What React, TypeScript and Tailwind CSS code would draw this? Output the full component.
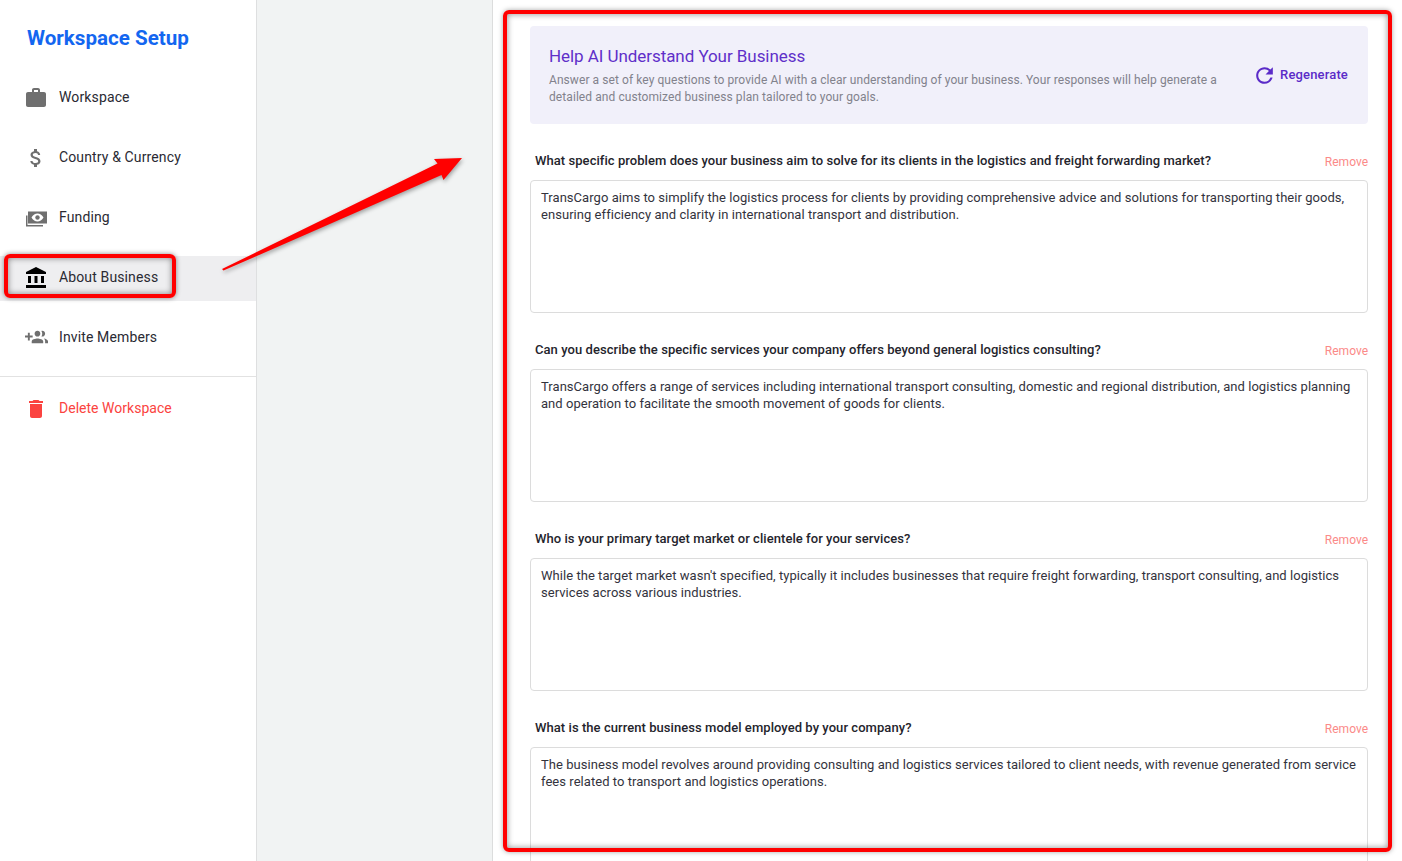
import React from "react";
import {
  MdWork,
  MdAttachMoney,
  MdAccountBalance,
  MdDelete,
  MdRefresh,
} from "react-icons/md";

const FundingIcon = () => (
  <svg width="24" height="24" viewBox="0 0 24 24" fill="currentColor">
    <path
      fillRule="evenodd"
      d="M4 5.500h19v12H4zM7.500 11.500c1.500-2.700 3.700-4 6-4s4.500 1.300 6 4c-1.500 2.700-3.700 4-6 4s-4.500-1.300-6-4z"
    />
    <circle cx="13.500" cy="11.500" r="2.200" />
    <path d="M2 9.500h1.500V19H19v1.500H2z" />
  </svg>
);

const InviteIcon = () => (
  <svg className="ml-[1px]" width="23" height="23" viewBox="0 0 24 24" fill="currentColor">
    <path d="M8 10H5V7H3v3H0v2h3v3h2v-3h3v-2zm10 1c1.660 0 2.990-1.340 2.990-3S19.660 5 18 5c-.320 0-.630.050-.910.140.570.810.900 1.790.900 2.860s-.340 2.040-.900 2.860c.280.090.590.140.910.140zm-5 0c1.660 0 2.990-1.340 2.990-3S14.660 5 13 5s-3 1.340-3 3 1.340 3 3 3zm6.620 2.160c.830.730 1.380 1.660 1.380 2.840v2h3v-2c0-1.540-2.370-2.490-4.380-2.840zM13 13c-2 0-6 1-6 3v2h12v-2c0-2-4-3-6-3z" />
  </svg>
);

const navItems = [
  { label: "Workspace", icon: <MdWork size={24} /> },
  { label: "Country & Currency", icon: <MdAttachMoney size={24} /> },
  { label: "Funding", icon: <FundingIcon /> },
  { label: "About Business", icon: <MdAccountBalance size={24} />, active: true },
  { label: "Invite Members", icon: <InviteIcon /> },
];

const questions = [
  {
    q: "What specific problem does your business aim to solve for its clients in the logistics and freight forwarding market?",
    a: "TransCargo aims to simplify the logistics process for clients by providing comprehensive advice and solutions for transporting their goods, ensuring efficiency and clarity in international transport and distribution.",
  },
  {
    q: "Can you describe the specific services your company offers beyond general logistics consulting?",
    a: "TransCargo offers a range of services including international transport consulting, domestic and regional distribution, and logistics planning and operation to facilitate the smooth movement of goods for clients.",
  },
  {
    q: "Who is your primary target market or clientele for your services?",
    a: "While the target market wasn't specified, typically it includes businesses that require freight forwarding, transport consulting, and logistics services across various industries.",
  },
  {
    q: "What is the current business model employed by your company?",
    a: "The business model revolves around providing consulting and logistics services tailored to client needs, with revenue generated from service fees related to transport and logistics operations.",
  },
];

const Sidebar = () => (
  <aside className="w-[257px] shrink-0 border-r border-[#dedfe0] bg-white">
    <h1 className="pl-[27px] pt-[24px] text-[20.6px] leading-[28px] font-bold text-[#1366f0]">
      Workspace Setup
    </h1>
    <nav className="mt-[24px] flex flex-col gap-[15px]">
      {navItems.map((item) => (
        <div
          key={item.label}
          className={`flex h-[45px] items-center pb-[2px] pl-[24px] ${item.active ? "bg-[#eeeef0] text-[#000000]" : "text-[#6f6f6f]"}`}
        >
          {item.icon}
          <span className="ml-[11px] text-[14px] tracking-[0.13px] text-[#2a2a33]">{item.label}</span>
        </div>
      ))}
    </nav>
    <div className="mt-[15px] border-t border-[#e2e2e2]" />
    <div className="mt-[9px] flex h-[45px] items-center pl-[24px] text-[#fb4340]">
      <MdDelete size={24} />
      <span className="ml-[11px] text-[14px] tracking-[0.02px]">Delete Workspace</span>
    </div>
  </aside>
);

const QuestionBlock = ({ q, a }: { q: string; a: string }) => (
  <div className="mt-[27px]">
    <div className="flex h-[20px] items-center justify-between pl-[5px]">
      <span className="text-[13px] font-medium tracking-[0.055px] text-[#24242c]">{q}</span>
      <span className="mt-[1px] text-[12px] text-[#fb8a88]">Remove</span>
    </div>
    <textarea
      readOnly
      defaultValue={a}
      className="mt-[9px] block h-[133px] w-full resize-none rounded-[4px] border border-[#dcdcdc] px-[10px] py-[8px] text-[13px] leading-[17px] tracking-[0.045px] text-[#33333d] outline-none"
    />
  </div>
);

// red markup drawn on top of the screenshot
const Annotations = () => (
  <>
    <div className="pointer-events-none absolute left-[4px] top-[254px] h-[44px] w-[172px] rounded-[6px] border-[4px] border-[#ff0000] shadow-[0_0_5px_rgba(0,0,0,0.45),inset_0_0_6px_rgba(0,0,0,0.45)]" />
    <div className="pointer-events-none absolute left-[503px] top-[10px] h-[842px] w-[889px] rounded-[6px] border-[4px] border-[#ff0000] shadow-[0_0_5px_rgba(0,0,0,0.35),inset_0_0_6px_rgba(0,0,0,0.45)]" />
    <svg
      className="pointer-events-none absolute left-[210px] top-[140px] drop-shadow-[1px_2px_2px_rgba(0,0,0,0.35)]"
      width="270"
      height="140"
      viewBox="210 140 270 140"
    >
      <polygon
        points="222,269 437.500,163.500 434,159 462,158 443.500,180 441.500,175 223.500,270.500"
        fill="#ff0000"
      />
    </svg>
  </>
);

export default function App() {
  return (
    <div className="relative flex h-screen overflow-hidden bg-white font-['Roboto',sans-serif]">
      <Sidebar />
      <div className="w-[236px] shrink-0 border-r border-[#dcdddd] bg-[#f1f3f3]" />
      <main className="flex-1 pl-[37px] pr-[34px] pt-[26px]">
        <div className="flex h-[98px] items-center justify-between rounded-[4px] bg-[#f1f0fa] pl-[19px] pr-[20px]">
          <div className="w-[680px]">
            <h2 className="-mt-[1px] text-[17px] leading-[24px] tracking-[-0.06px] text-[#5f2fc9]">Help AI Understand Your Business</h2>
            <p className="mt-[4px] text-[12px] leading-[17px] tracking-[0.075px] text-[#82828c]">
              Answer a set of key questions to provide AI with a clear understanding of your business. Your responses
              will help generate a detailed and customized business plan tailored to your goals.
            </p>
          </div>
          <button className="flex items-center gap-[3px] text-[13px] font-medium tracking-[0.16px] text-[#5b2bc8]">
            <MdRefresh size={25} />
            Regenerate
          </button>
        </div>
        {questions.map((item) => (
          <QuestionBlock key={item.q} q={item.q} a={item.a} />
        ))}
      </main>
      <Annotations />
    </div>
  );
}
